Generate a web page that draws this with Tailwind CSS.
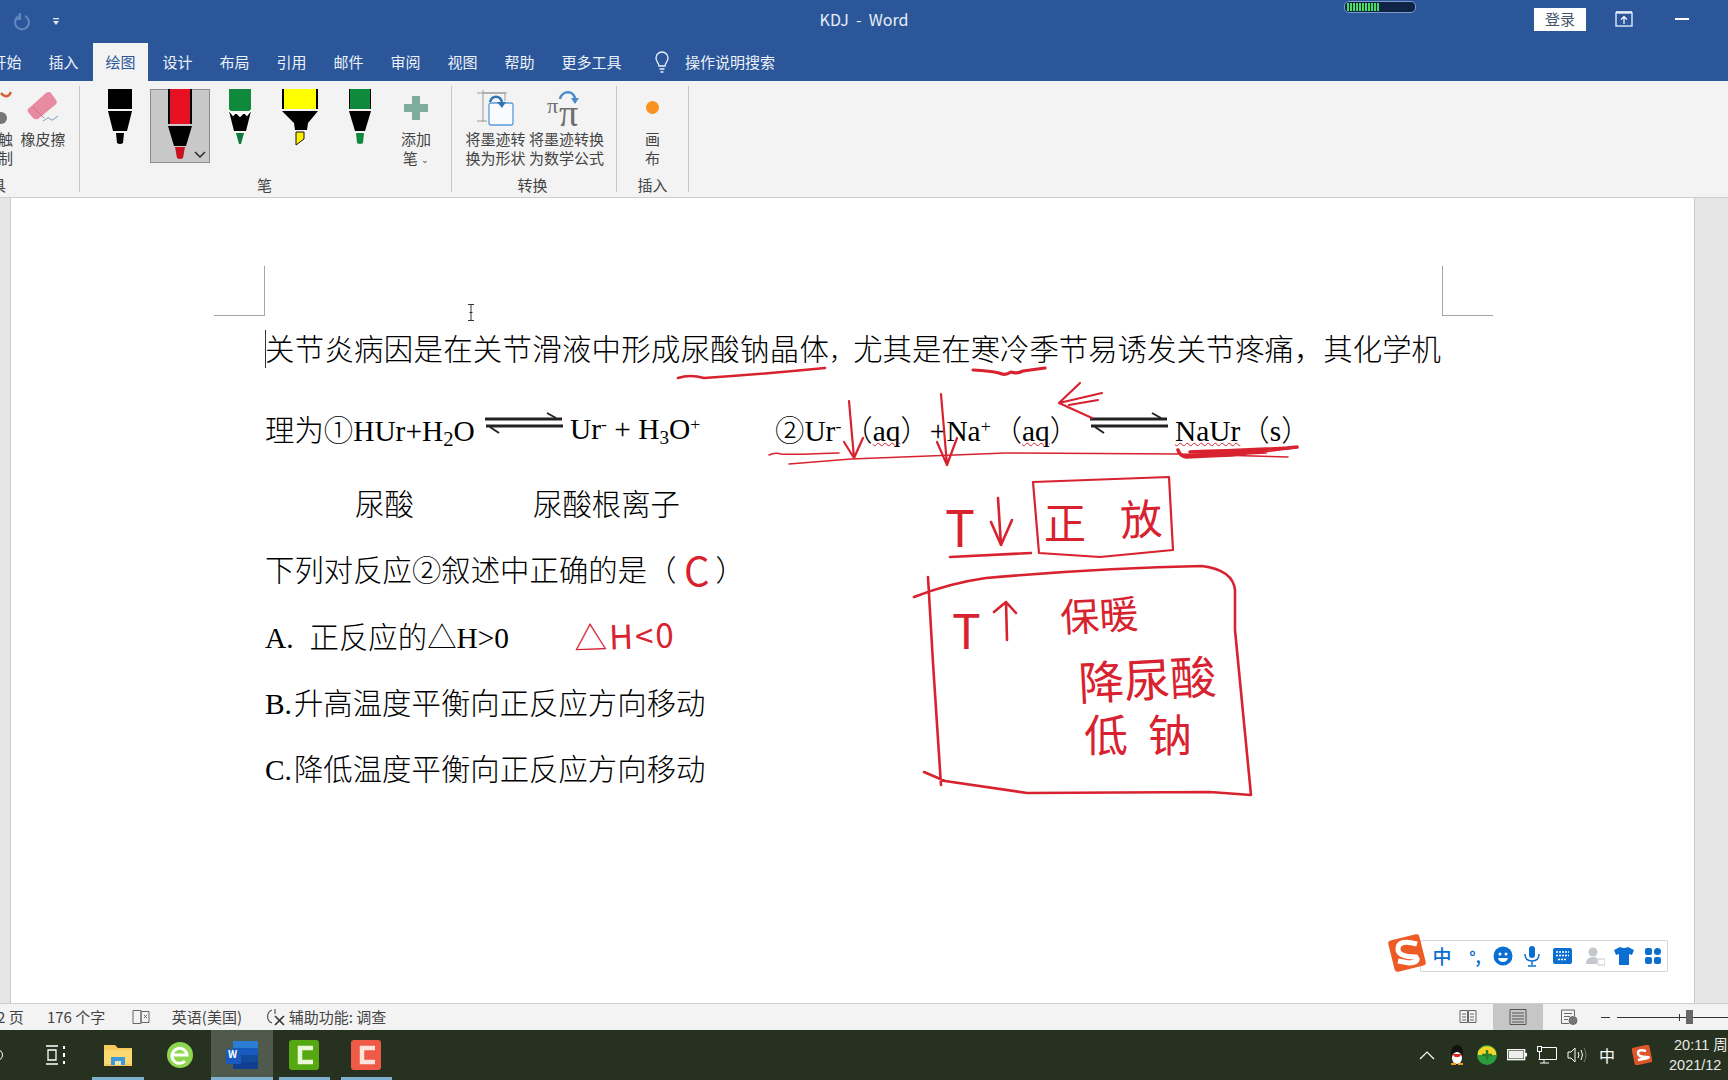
<!DOCTYPE html>
<html lang="zh-CN">
<head>
    <meta charset="UTF-8">
    <title>KDJ - Word</title>
    <script src="https://cdn.jsdelivr.net/npm/@tailwindcss/browser@4"></script>
</head>
<body class="m-0 overflow-hidden">
<div class="relative w-[1728px] h-[1080px] overflow-hidden flex flex-col font-['Noto_Sans_CJK_SC',sans-serif] bg-white">

    <!-- Title bar -->
    <div class="h-[43px] bg-[#2b579a] grid grid-cols-3 shrink-0 text-white">
        <div class="flex items-center">
            <svg class="ml-[13px]" width="18" height="20" viewBox="0 0 18 20" fill="none" stroke="#5f86bd" stroke-width="2.2"><path d="M6 4a7 7 0 1 0 6 0"/><path d="M7 1v6H2"/></svg>
            <svg class="ml-[21px]" width="8" height="10" viewBox="0 0 8 10" fill="#dfe8f4"><rect x="1" y="1" width="6" height="1.3"/><path d="M1 4h6L4 8z"/></svg>
        </div>
        <div class="flex items-center justify-center text-[16px] text-[#e8eef7] whitespace-pre pb-[5px]">KDJ  -  Word</div>
        <div class="flex">
            <div class="ml-[192px] mt-[1px] w-[72px] h-[12px] rounded-[5px] bg-[#0f2347] border border-[#7d9ac8] flex items-center gap-[1px] pl-[2px]">
                <i class="w-[2px] h-[8px] bg-[#4ade5c]"></i><i class="w-[2px] h-[8px] bg-[#4ade5c]"></i><i class="w-[2px] h-[8px] bg-[#4ade5c]"></i><i class="w-[2px] h-[8px] bg-[#4ade5c]"></i><i class="w-[2px] h-[8px] bg-[#4ade5c]"></i><i class="w-[2px] h-[8px] bg-[#4ade5c]"></i><i class="w-[2px] h-[8px] bg-[#4ade5c]"></i><i class="w-[2px] h-[8px] bg-[#4ade5c]"></i><i class="w-[2px] h-[8px] bg-[#4ade5c]"></i><i class="w-[2px] h-[8px] bg-[#4ade5c]"></i><i class="w-[2px] h-[8px] bg-[#4ade5c]"></i>
            </div>
            <div class="ml-[118px] mt-[8px] w-[52px] h-[23px] bg-white text-[#44546a] text-[15px] flex items-center justify-center">登录</div>
            <svg class="ml-[29px] mt-[11px]" width="18" height="16" viewBox="0 0 18 16" fill="none"><rect x="1" y="2" width="16" height="13" fill="#2b579a" stroke="#cfe0f5" stroke-width="1.5"/><path d="M1 1h16" stroke="#fff" stroke-width="1.5"/><path d="M9 13V6M6 8.500l3-3 3 3" stroke="#fff" stroke-width="1.200"/></svg>
            <div class="ml-[42px] mt-[18px] w-[14px] h-[1.500px] bg-white"></div>
        </div>
    </div>

    <!-- Tabs -->
    <div class="h-[38px] bg-[#2b579a] shrink-0 flex items-center text-[15px] text-[#edf2f9] overflow-hidden">
        <div class="w-[57px] h-full flex items-center justify-center ml-[-22px]">开始</div>
        <div class="w-[57px] h-full flex items-center justify-center">插入</div>
        <div class="w-[55px] mx-[1px] h-full bg-[#f3f3f3] text-[#2b579a] flex items-center justify-center">绘图</div>
        <div class="w-[57px] h-full flex items-center justify-center">设计</div>
        <div class="w-[57px] h-full flex items-center justify-center">布局</div>
        <div class="w-[57px] h-full flex items-center justify-center">引用</div>
        <div class="w-[57px] h-full flex items-center justify-center">邮件</div>
        <div class="w-[57px] h-full flex items-center justify-center">审阅</div>
        <div class="w-[57px] h-full flex items-center justify-center">视图</div>
        <div class="w-[57px] h-full flex items-center justify-center">帮助</div>
        <div class="w-[87px] h-full flex items-center justify-center">更多工具</div>
        <svg class="ml-[18px]" width="18" height="24" viewBox="0 0 18 24" fill="none" stroke="#edf2f9" stroke-width="1.300"><path d="M6 16c0-3-3-4-3-8a6 6 0 0 1 12 0c0 4-3 5-3 8z"/><path d="M6.500 19h5M7.500 22h3"/></svg>
        <div class="ml-[14px]">操作说明搜索</div>
    </div>

    <!-- Ribbon -->
    <div class="h-[117px] bg-[#f3f3f3] border-b border-[#cfcfcf] shrink-0 flex pt-[5px] text-[15px] leading-[19px] text-[#444] overflow-hidden">

        <!-- 工具 -->
        <div class="w-[80px] h-[106px] border-r border-[#c6c6c6] flex flex-col justify-between">
            <div class="flex overflow-hidden">
                <div class="w-[21px] shrink-0 pt-[43px] ml-[-1px] text-left">
                    <svg class="absolute left-0 top-[90px]" width="12" height="36" viewBox="0 0 12 36" fill="none"><path d="M1 3c4 5 8 4 10-1" stroke="#d2603a" stroke-width="2.500"/><circle cx="1" cy="28" r="6" fill="#777"/></svg>
                    <div class="ml-[-1px]">触</div><div class="ml-[-1px]">制</div>
                </div>
                <div class="flex flex-col items-center w-[46px]">
                    <svg class="mt-[4px]" width="36" height="34" viewBox="0 0 36 34"><path d="M3 19 21 3q3-2 5 0l5 7q2 3-1 5L13 29q-3 1-5-1l-5-6q-1-2 0-3z" fill="#e88ba0"/><path d="M8 17l11 11" stroke="#c76b80" stroke-width="1"/><path d="M18 31c4-3 6-4 7-2s3 1 8-3" stroke="#6f8fb0" fill="none"/></svg>
                    <div class="mt-[5px] whitespace-nowrap">橡皮擦</div>
                </div>
            </div>
            <div class="leading-[20px] ml-[-9px] mb-[-3px]">具</div>
        </div>

        <!-- 笔 -->
        <div class="w-[372px] h-[106px] border-r border-[#c6c6c6] flex flex-col justify-between">
            <div class="flex pl-[10px] pt-[3px]">
                <div class="w-[60px] h-[74px]">
                    <svg width="60" height="74" viewBox="0 0 60 74"><rect x="18" width="24" height="20"/><path d="M18 22h24l-5 20H23z"/><path d="M26 44h8l-1 10q-3 2-6 0z"/></svg>
                </div>
                <div class="relative w-[60px] h-[74px] bg-[#c8c8c8] border border-[#8c8c8c]">
                    <svg class="absolute left-[-1px] top-[-1px]" width="60" height="74" viewBox="0 0 60 74"><rect x="18" width="24" height="35"/><rect x="20" width="20" height="35" fill="#e81123"/><path d="M18 37h24l-6 20H24z"/><path d="M25 58h10l-2 11q-3 2-6 0z" fill="#c9111f"/><path d="M45 63l5 5 5-5" fill="none" stroke="#222" stroke-width="1.400"/></svg>
                </div>
                <div class="w-[60px] h-[74px]">
                    <svg width="60" height="74" viewBox="0 0 60 74"><rect x="19" width="22" height="22" fill="#0f8a3c"/><path d="M19 22l4 5 3-3 4 4 4-4 3 3 4-5-5 20H24z"/><path d="M19 21l4 5 3-3 4 4 4-4 3 3 4-5" fill="none" stroke="#fff" stroke-width="1.500"/><path d="M26 44h8l-3 11h-2z" fill="#0f7a3c"/></svg>
                </div>
                <div class="w-[60px] h-[74px]">
                    <svg width="60" height="74" viewBox="0 0 60 74"><rect x="12" width="36" height="20"/><rect x="14" width="32" height="20" fill="#ffff00"/><path d="M12 22h36l-10 12-1 7H25l-1-7z"/><path d="M26 43h8v7l-8 6z" fill="#ffef00" stroke="#111"/></svg>
                </div>
                <div class="w-[60px] h-[74px]">
                    <svg width="60" height="74" viewBox="0 0 60 74"><rect x="19" width="22" height="20"/><rect x="20" width="20" height="20" fill="#0f8a3c"/><path d="M19 22h22l-6 20H25z"/><path d="M26 44h8l-1 10q-3 2-6 0z" fill="#0f8a3c"/></svg>
                </div>
                <div class="w-[52px] flex flex-col items-center">
                    <svg class="mt-[7px]" width="24" height="24" viewBox="0 0 24 24" fill="#7fae9e"><rect x="8" width="8" height="24"/><rect y="8" width="24" height="8"/></svg>
                    <div class="mt-[9px]">添加</div>
                    <div>笔 <span class="text-[9px] align-[1px]">⌄</span></div>
                </div>
            </div>
            <div class="text-center leading-[20px] mb-[-3px] pr-[2px]">笔</div>
        </div>

        <!-- 转换 -->
        <div class="w-[165px] h-[106px] border-r border-[#c6c6c6] flex flex-col justify-between">
            <div class="flex pl-[10px] pt-[4px] whitespace-nowrap">
                <div class="w-[67px] flex flex-col items-center">
                    <svg width="38" height="37" viewBox="0 0 38 37" fill="none"><path d="M6 0v32M0 3h30M0 31h10" stroke="#9a9a9a"/><path d="M6 3h22v8" stroke="#9a9a9a"/><rect x="12" y="13" width="24" height="22" rx="2" fill="#f8fbff" stroke="#5b9bd5" stroke-width="1.300"/><path d="M13 12c2-7 10-7 12 0" stroke="#2e75b6" stroke-width="2.500"/><path d="M20 12h9l-4 6z" fill="#2e75b6"/></svg>
                    <div class="mt-[2px] leading-[19px]">将墨迹转</div><div class="leading-[19px]">换为形状</div>
                </div>
                <div class="w-[75px] flex flex-col items-center">
                    <svg width="42" height="37" viewBox="0 0 42 37"><text x="1" y="23" font-size="22" fill="#6f6f6f" font-family="Liberation Serif">π</text><text x="13" y="36" font-size="38" fill="#6f6f6f" font-family="Liberation Serif">π</text><path d="M14 9c2-9 14-9 15 0" fill="none" stroke="#4a8cc7" stroke-width="2.500"/><path d="M25 8h8l-4 6z" fill="#4a8cc7"/></svg>
                    <div class="mt-[2px] leading-[19px]">将墨迹转换</div><div class="leading-[19px]">为数学公式</div>
                </div>
            </div>
            <div class="text-center leading-[20px] mb-[-3px] pr-[3px]">转换</div>
        </div>

        <!-- 插入 -->
        <div class="w-[72px] h-[106px] border-r border-[#c6c6c6] flex flex-col justify-between">
            <div class="flex flex-col items-center pt-[15px]">
                <div class="w-[13px] h-[13px] rounded-full bg-[#f7931e]"></div>
                <div class="mt-[15px]">画</div>
                <div>布</div>
            </div>
            <div class="text-center leading-[20px] mb-[-3px]">插入</div>
        </div>
    </div>

    <!-- Document -->
    <div class="h-[805px] shrink-0 flex bg-[#e6e6e6]">
        <div class="w-[11px] border-r border-[#c8c8c8]"></div>
        <div class="relative w-[1683px] bg-white pl-[254px] pt-[129px] text-[29.4px] leading-[40px] text-black font-light font-['Liberation_Serif','Noto_Sans_CJK_SC',serif] whitespace-nowrap">
            <!-- crop marks -->
            <div class="absolute left-[203px] top-[68px] w-[51px] h-[50px] border-r border-b border-[#a6a6a6]"></div>
            <div class="absolute left-[1431px] top-[68px] w-[51px] h-[50px] border-l border-b border-[#a6a6a6]"></div>
            <div class="absolute left-[254px] top-[132px] w-px h-[38px] bg-[#333]"></div>

            <div class="h-[40px] font-['Noto_Sans_CJK_SC',sans-serif]"><span class="tracking-[0.3px]">关节炎病因是在关节滑液中形成尿酸钠晶体</span><span class="text-[24px]">，</span>尤其是在寒冷季节易诱发关节疼痛，其化学机</div>

            <div class="h-[40px] mt-[42px] flex items-center">
                <span class="w-[220px]"><span class="font-['Noto_Sans_CJK_SC',sans-serif]">理为①</span>HUr+H<sub class="text-[70%]">2</sub>O</span>
                <svg class="mt-[-10px]" width="78" height="24" viewBox="0 0 78 24"><path d="M0 7h77M1 14h77" stroke="#222" stroke-width="3"/><path d="M62 1l9 5M5 15l9 6" stroke="#222" stroke-width="2"/></svg>
                <span class="ml-[7px] w-[205px]">Ur<sup class="text-[60%]">-</sup> + H<sub class="text-[65%]">3</sub>O<sup class="text-[60%]">+</sup></span>
                <span class="w-[315px]"><span class="font-['Noto_Sans_CJK_SC',sans-serif]">②</span>Ur<sup class="text-[60%] mr-[2px]">-</sup><span class="font-['Noto_Sans_CJK_SC',sans-serif]">（</span><span class="underline decoration-wavy decoration-[#d0222f] decoration-1">aq</span><span class="font-['Noto_Sans_CJK_SC',sans-serif]">）</span>+Na<sup class="text-[60%] mr-[2px]">+</sup><span class="font-['Noto_Sans_CJK_SC',sans-serif]">（</span><span class="underline decoration-wavy decoration-[#d0222f] decoration-1">aq</span><span class="font-['Noto_Sans_CJK_SC',sans-serif]">）</span></span>
                <svg class="mt-[-10px]" width="78" height="24" viewBox="0 0 78 24"><path d="M0 7h77M1 14h77" stroke="#222" stroke-width="3"/><path d="M62 1l9 5M5 15l9 6" stroke="#222" stroke-width="2"/></svg>
                <span class="ml-[7px]"><span class="underline decoration-wavy decoration-[#d0222f] decoration-1">NaUr</span><span class="font-['Noto_Sans_CJK_SC',sans-serif]">（</span>s<span class="font-['Noto_Sans_CJK_SC',sans-serif]">）</span></span>
            </div>

            <div class="h-[40px] mt-[33px] flex font-['Noto_Sans_CJK_SC',sans-serif]">
                <span class="ml-[90px] w-[178px]">尿酸</span>
                <span>尿酸根离子</span>
            </div>

            <div class="h-[40px] mt-[26px] font-['Noto_Sans_CJK_SC',sans-serif]">下列对反应②叙述中正确的是（<span class="ml-[39px]">）</span></div>
            <div class="h-[40px] mt-[27px]">A.<span class="ml-[16px] font-['Noto_Sans_CJK_SC',sans-serif]">正反应的△</span>H&gt;0</div>
            <div class="h-[40px] mt-[26px]">B.<span class="ml-[2px] font-['Noto_Sans_CJK_SC',sans-serif]">升高温度平衡向正反应方向移动</span></div>
            <div class="h-[40px] mt-[26px]">C.<span class="ml-[2px] font-['Noto_Sans_CJK_SC',sans-serif]">降低温度平衡向正反应方向移动</span></div>
        </div>
        <div class="w-[34px] border-l border-[#c8c8c8]"></div>
    </div>

    <!-- Status bar -->
    <div class="h-[27px] bg-[#f3f3f3] border-t border-[#cfcfcf] shrink-0 flex items-center text-[15px] text-[#444] whitespace-nowrap overflow-hidden">
        <span class="ml-[-3px] w-[50px]">2 页</span>
        <span class="w-[85px]">176 个字</span>
        <svg width="18" height="16" viewBox="0 0 18 16" fill="none" stroke="#666"><path d="M1 1.500h8v13H1zM9 2.500h8v11H9z"/><path d="M12 6l3 3M15 6l-3 3"/></svg>
        <span class="ml-[22px] w-[94px]">英语(美国)</span>
        <svg width="20" height="18" viewBox="0 0 20 18" fill="none" stroke="#555" stroke-width="1.200"><path d="M6 2a7 7 0 0 0 0 13"/><path d="M9 1v5"/><path d="M9 8l9 9M18 8l-9 9" stroke="#333" stroke-width="1.600"/></svg>
        <span class="ml-[3px] w-[1172px]">辅助功能: 调查</span>
        <svg width="18" height="16" viewBox="0 0 18 16" fill="none" stroke="#666"><path d="M1 1.500h7.500v12H1zM9.500 1.500H17v12H9.500zM3 5h4M3 8h4M3 11h4M11 5h4M11 8h4M11 11h4"/></svg>
        <div class="ml-[16px] w-[50px] h-[26px] bg-[#c6c6c6] flex items-center justify-center">
            <svg width="18" height="16" viewBox="0 0 18 16" fill="none" stroke="#555"><path d="M1 .500h16v15H1zM3 4h12M3 7h12M3 10h12M3 13h12"/></svg>
        </div>
        <svg class="ml-[17px]" width="18" height="16" viewBox="0 0 18 16" fill="none" stroke="#666"><path d="M9 14.500H1.500V1h13v6M4 4.500h8M4 7.500h6M4 10.500h4"/><circle cx="13" cy="11.500" r="4" fill="#777"/></svg>
        <div class="ml-[23px] w-[9px] h-px bg-[#333]"></div>
        <div class="ml-[7px] w-[111px] h-px bg-[#333] relative">
            <div class="absolute left-[62px] top-[-3px] w-px h-[7px] bg-[#333]"></div>
            <div class="absolute left-[69px] top-[-7px] w-[7px] h-[14px] bg-[#666]"></div>
        </div>
    </div>

    <!-- Taskbar -->
    <div class="h-[50px] bg-[#26321f] shrink-0 flex text-white overflow-hidden">
        <div class="w-[25px] flex items-center">
            <div class="w-[12px] h-[12px] rounded-full border border-white ml-[-9px]"></div>
        </div>
        <div class="w-[62px] flex items-center justify-center">
            <svg width="22" height="20" viewBox="0 0 22 20" fill="none" stroke="#fff" stroke-width="1.300"><path d="M1 1h12M1 19h12M3 5h8v10H3z"/><path d="M19 1v3M19 8v4M19 16v3" stroke-width="2"/></svg>
        </div>
        <div class="relative w-[62px] flex items-center justify-center">
            <svg width="28" height="26" viewBox="0 0 28 26"><path d="M0 3h11l3 3h14v18H0z" fill="#f7c95a"/><path d="M0 8h28v14H0z" fill="#fbd870"/><path d="M7 15h14v8H7z" fill="#3a9bd8"/><path d="M11 19h6v4h-6z" fill="#f3e3b0"/></svg>
            <div class="absolute left-[5px] right-[5px] bottom-0 h-[3px] bg-[#7fb0d0]"></div>
        </div>
        <div class="w-[62px] flex items-center justify-center">
            <svg width="28" height="28" viewBox="0 0 28 28"><circle cx="14" cy="14" r="13" fill="#8fd650"/><path d="M7 14h14a7.500 7.500 0 1 0-2 6" fill="none" stroke="#fff" stroke-width="3"/></svg>
        </div>
        <div class="relative w-[62px] h-full bg-[#4f5a4c] flex items-center justify-center">
            <svg width="32" height="28" viewBox="0 0 32 28"><rect x="7" width="25" height="28" fill="#2b7cd3"/><rect x="7" y="7" width="25" height="7" fill="#185abd"/><rect x="7" y="14" width="25" height="7" fill="#124a9c"/><rect x="7" y="21" width="25" height="7" fill="#103f91"/><rect x="0" y="8" width="15" height="15" rx="1" fill="#185abd"/></svg>
            <span class="absolute left-[17px] top-[17px] text-[10px] font-bold leading-[14px]">W</span>
            <div class="absolute left-0 right-0 bottom-0 h-[3px] bg-[#7fb0d0]"></div>
        </div>
        <div class="relative w-[62px] flex items-center justify-center">
            <svg width="30" height="30" viewBox="0 0 30 30"><rect width="30" height="30" rx="3" fill="#56a813"/><path d="M24 8H11v14h13" fill="none" stroke="#e9f7d6" stroke-width="4.500"/></svg>
            <div class="absolute left-[6px] right-[5px] bottom-0 h-[3px] bg-[#7fb0d0]"></div>
        </div>
        <div class="relative w-[62px] flex items-center justify-center">
            <svg width="30" height="30" viewBox="0 0 30 30"><rect width="30" height="30" rx="3" fill="#ee5a45"/><path d="M24 8H11v14h13" fill="none" stroke="#fde3dc" stroke-width="4.500"/></svg>
            <div class="absolute left-[6px] right-[5px] bottom-0 h-[3px] bg-[#7fb0d0]"></div>
        </div>

        <!-- Tray -->
        <div class="ml-[1015px] flex items-center">
            <div class="w-[30px] flex justify-center">
                <svg width="16" height="9" viewBox="0 0 16 9" fill="none" stroke="#fff" stroke-width="1.200"><path d="M1 8l7-7 7 7"/></svg>
            </div>
            <div class="w-[30px] flex justify-center">
                <svg width="16" height="20" viewBox="0 0 16 20"><ellipse cx="8" cy="8" rx="6" ry="8" fill="#111"/><ellipse cx="8" cy="13" rx="5" ry="6" fill="#fff"/><path d="M3 9h10l-3 3H6z" fill="#d22"/><path d="M2 19h5M9 19h5" stroke="#e9a21a" stroke-width="2"/></svg>
            </div>
            <div class="w-[30px] flex justify-center">
                <svg width="20" height="20" viewBox="0 0 20 20"><circle cx="10" cy="10" r="10" fill="#2b9d3c"/><path d="M1 7a10 10 0 0 1 18 0v3H1z" fill="#f5d327"/><path d="M10 5v10M5 10h10" stroke="#2b7d2c" stroke-width="2.500"/></svg>
            </div>
            <div class="w-[30px] flex justify-center">
                <svg width="20" height="12" viewBox="0 0 20 12" fill="none"><rect x=".700" y=".700" width="17" height="10" stroke="#fff" stroke-width="1.300"/><rect x="2" y="2" width="14.500" height="7.500" fill="#eee"/><rect x="18" y="4" width="2" height="3.500" fill="#fff"/></svg>
            </div>
            <div class="w-[30px] flex justify-center">
                <svg width="20" height="18" viewBox="0 0 20 18" fill="none" stroke="#fff"><path d="M5 1.500h14.500v12H1.500M7 14v3M3 17h9"/><rect x=".500" y=".500" width="4" height="5"/><path d="M2.500 6v8"/></svg>
            </div>
            <div class="w-[30px] flex justify-center">
                <svg width="20" height="16" viewBox="0 0 20 16" fill="none" stroke="#fff"><path d="M1 5h3l4-4v14l-4-4H1z"/><path d="M11 5q2 3 0 6M14 3q3 5 0 10"/><path d="M17 1q4 7 0 14" stroke="#777"/></svg>
            </div>
            <div class="w-[30px] text-center text-[16px]">中</div>
            <div class="w-[40px] flex justify-center">
                <svg width="20" height="20" viewBox="0 0 20 20"><rect x="1" y="1" width="18" height="18" rx="2" fill="#e0562b" transform="rotate(-12 10 10)"/><path d="M14 6Q6 4 6 8t8 4-8 3" fill="none" stroke="#fff" stroke-width="2.500"/></svg>
            </div>
            <div class="ml-[7px] text-[14.500px] leading-[20px] text-[#e8e8e8] whitespace-nowrap font-['Liberation_Sans','Noto_Sans_CJK_SC',sans-serif]">
                <div class="ml-[5px]">20:11 周</div>
                <div>2021/12</div>
            </div>
        </div>
    </div>

    <!-- Sogou IME bar, floats over the page -->
    <div class="absolute left-[1420px] top-[940px] w-[248px] h-[32px] bg-white border border-[#cdd5df] rounded-[2px] flex items-center text-[#0a6fd0]">
        <span class="ml-[9px] w-[24px] text-[19px] font-medium text-center">中</span>
        <span class="ml-[9px] w-[24px] text-[16px] font-bold text-center leading-[16px]">°,</span>
        <svg class="ml-[6px]" width="20" height="20" viewBox="0 0 20 20"><circle cx="10" cy="10" r="9.500" fill="#0a6fd0"/><circle cx="7" cy="8" r="1.500" fill="#fff"/><circle cx="13" cy="8" r="1.500" fill="#fff"/><path d="M5 12h10q-1 4-5 4t-5-4z" fill="#fff"/></svg>
        <svg class="ml-[10px]" width="18" height="22" viewBox="0 0 18 22" fill="none"><rect x="6" y="1" width="6" height="12" rx="3" fill="#0a6fd0"/><path d="M2 9q0 7 7 7t7-7M9 16v4M5 21h8" stroke="#0a6fd0" stroke-width="1.500"/></svg>
        <svg class="ml-[12px]" width="19" height="16" viewBox="0 0 19 16"><rect width="19" height="16" rx="2" fill="#0a6fd0"/><path d="M3 4h13M3 7.500h13M5 11.500h9" stroke="#fff" stroke-width="1.500" stroke-dasharray="2 1"/></svg>
        <svg class="ml-[13px]" width="20" height="20" viewBox="0 0 20 20" fill="#c4c8cc"><circle cx="8" cy="6" r="4.500"/><path d="M1 18q0-7 7-7 3 0 4 1v6z"/><rect x="13" y="13" width="7" height="6" fill="none" stroke="#c4c8cc"/></svg>
        <svg class="ml-[9px]" width="20" height="18" viewBox="0 0 20 18" fill="#0a6fd0"><path d="M6 0q4 2 8 0l6 3-2 5-3-1v11H5V7L2 8 0 3z"/></svg>
        <svg class="ml-[11px]" width="16" height="16" viewBox="0 0 16 16" fill="#0a6fd0"><rect width="7" height="7" rx="2"/><circle cx="12.500" cy="3.500" r="3.500"/><rect y="9" width="7" height="7" rx="2"/><rect x="9" y="9" width="7" height="7" rx="2"/></svg>
    </div>
    <svg class="absolute left-[1387px] top-[933px]" width="40" height="40" viewBox="0 0 40 40"><rect x="4" y="4" width="32" height="32" rx="3" fill="#ee5a24" transform="rotate(-14 20 20)"/><path d="M30 11Q12 6 11 15t18 9q4 5-7 6l-11-2" fill="none" stroke="#fff" stroke-width="5"/></svg>

    <!-- I-beam pointer -->
    <svg class="absolute left-[467px] top-[304px]" width="8" height="17" viewBox="0 0 8 17" fill="none" stroke="#333"><path d="M1 .500h6M1 16.500h6M4 .500v16M2.500 8.500h3"/></svg>

    <!-- Pen ink over the document -->
    <svg class="absolute inset-0 pointer-events-none" width="1728" height="1080" viewBox="0 0 1728 1080" fill="none" stroke="#d8222f" stroke-width="2.200" stroke-linecap="round" stroke-linejoin="round">
        <path stroke-width="2.600" d="M678 378q12-4 26 0 60-4 121-10"/>
        <path stroke-width="3.200" d="M973 370q18 1 26 3 6 3 12-1 6 2 12-1l22-3"/>
        <path stroke-width="1.500" d="M789 464 851 459 1006 453 1178 454 1288 457M769 455q6-3 12-1 6 1 58-1"/>
        <path stroke-width="3.600" d="M1178 450q2 6 8 7 20-1 45-2 30-4 66-8M1190 452q40-1 100-4M1186 456l80-4"/>
        <path d="M849 401 854 458M844 442 854 458 863 438"/>
        <path d="M941 394 947 465M937 442 947 465 957 438"/>
        <path d="M1080 383 1059 403 1092 418M1059 403 1102 393M1069 405 1098 400"/>
        <path stroke-width="2.600" d="M998 498 1001 545M991 522 1001 545 1012 520"/>
        <path stroke-width="2.600" d="M950 557 1031 553"/>
        <path d="M1033 482 1169 477 1173 550 1100 557 1039 553 1033 482"/>
        <path stroke-width="2.600" d="M914 597Q950 583 986 578 1100 568 1202 566 1233 570 1235 590L1235 630 1251 795 1210 792 1027 793 945 781 924 772M928 577 933 663 941 785"/>
        <path stroke-width="2.600" d="M1006 602 1007 640M994 612 1006 602 1016 613"/>
    </svg>

    <!-- Handwritten notes -->
    <span class="absolute left-[684px] top-[547px] text-[40px] leading-[44px] text-[#d8222f]">C</span>
    <span class="absolute left-[574px] top-[615px] text-[33px] leading-[40px] text-[#d8222f] tracking-[2px] -rotate-2">△H&lt;0</span>
    <span class="absolute left-[945px] top-[498px] text-[50px] leading-[54px] text-[#d8222f]">T</span>
    <span class="absolute left-[1044px] top-[498px] text-[42px] leading-[46px] text-[#d8222f]">正</span>
    <span class="absolute left-[1120px] top-[494px] text-[42px] leading-[46px] text-[#d8222f] -rotate-3">放</span>
    <span class="absolute left-[952px] top-[602px] text-[48px] leading-[52px] text-[#d8222f]">T</span>
    <span class="absolute left-[1060px] top-[593px] text-[39px] leading-[40px] text-[#d8222f] -rotate-3">保暖</span>
    <span class="absolute left-[1078px] top-[654px] text-[46px] leading-[46px] text-[#d8222f] -rotate-3">降尿酸</span>
    <span class="absolute left-[1084px] top-[710px] text-[44px] leading-[46px] text-[#d8222f] tracking-[20px]">低钠</span>
</div>
</body>
</html>
